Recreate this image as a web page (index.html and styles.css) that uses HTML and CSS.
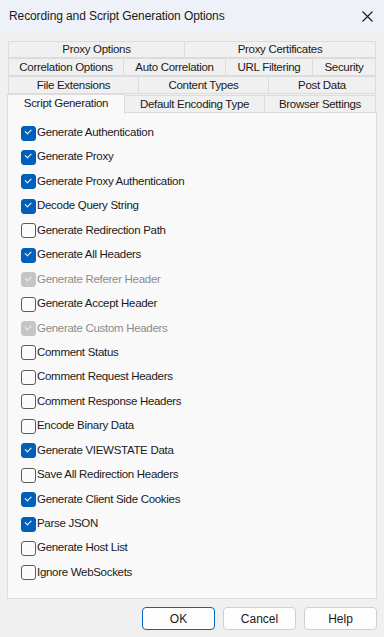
FILE: index.html
```html
<!DOCTYPE html>
<html lang="en">

<head>
    <meta charset="UTF-8">
    <meta name="viewport" content="width=device-width, initial-scale=1.0">
    <title>Recording and Script Generation Options</title>
    <link rel="stylesheet" href="styles.css">
</head>

<body>
    <div class="window">
        <div class="titlebar">
            <span class="title">Recording and Script Generation Options</span>
            <svg class="close" width="11" height="11" viewBox="0 0 11 11">
                <path d="M0.5 0.5 L10.5 10.5 M10.5 0.5 L0.5 10.5" stroke="#1a1a1a" stroke-width="1.1" fill="none" />
            </svg>
        </div>

        <div class="content">
            <div class="tabs">
                <div class="tab-row row-1">
                    <div class="tab">Proxy Options</div>
                    <div class="tab">Proxy Certificates</div>
                </div>
                <div class="tab-row row-2">
                    <div class="tab">Correlation Options</div>
                    <div class="tab">Auto Correlation</div>
                    <div class="tab">URL Filtering</div>
                    <div class="tab">Security</div>
                </div>
                <div class="tab-row row-3">
                    <div class="tab">File Extensions</div>
                    <div class="tab">Content Types</div>
                    <div class="tab">Post Data</div>
                </div>
                <div class="tab-row row-4">
                    <div class="tab active">Script Generation</div>
                    <div class="tab">Default Encoding Type</div>
                    <div class="tab">Browser Settings</div>
                </div>
            </div>

            <div class="panel">
                <ul class="options">
                    <li class="checked">Generate Authentication</li>
                    <li class="checked">Generate Proxy</li>
                    <li class="checked">Generate Proxy Authentication</li>
                    <li class="checked">Decode Query String</li>
                    <li>Generate Redirection Path</li>
                    <li class="checked">Generate All Headers</li>
                    <li class="checked disabled">Generate Referer Header</li>
                    <li>Generate Accept Header</li>
                    <li class="checked disabled">Generate Custom Headers</li>
                    <li>Comment Status</li>
                    <li>Comment Request Headers</li>
                    <li>Comment Response Headers</li>
                    <li>Encode Binary Data</li>
                    <li class="checked">Generate VIEWSTATE Data</li>
                    <li>Save All Redirection Headers</li>
                    <li class="checked">Generate Client Side Cookies</li>
                    <li class="checked">Parse JSON</li>
                    <li>Generate Host List</li>
                    <li>Ignore WebSockets</li>
                </ul>
            </div>

            <div class="buttons">
                <button class="btn default">OK</button>
                <button class="btn">Cancel</button>
                <button class="btn">Help</button>
            </div>
        </div>
    </div>
</body>

</html>
```

FILE: styles.css
```css
* {
    box-sizing: border-box;
}

html,
body {
    margin: 0;
    padding: 0;
}

body {
    width: 384px;
    height: 637px;
    background-color: #f0f0f0;
    font-family: 'Liberation Sans', Arial, sans-serif;
    font-size: 11.5px;
    letter-spacing: -0.3px;
    color: #1a1a1a;
    overflow: hidden;
}

.window {
    height: 637px;
    display: flex;
    flex-direction: column;
}

.titlebar {
    height: 32px;
    flex: none;
    display: flex;
    align-items: center;
    justify-content: space-between;
    padding: 0 11px 0 9px;
    background-color: #eef2f8;
}

.title {
    font-size: 12px;
    letter-spacing: -0.1px;
}

.content {
    padding: 9px 7px 0 7px;
}

/* tabs */
.tabs {
    padding-left: 1px;
}

.tab-row {
    display: grid;
    height: 18px;
}

.row-1 {
    grid-template-columns: 176px 191px;
    height: 17px;
}

.row-2 {
    grid-template-columns: 115px 102px 87px 63px;
}

.row-3 {
    grid-template-columns: 130px 130px 107px;
}

.row-4 {
    grid-template-columns: 116px 140px 111px;
    align-items: end;
}

.tab {
    height: 18px;
    margin-right: -1px;
    border: 1px solid #dcdcdc;
    background-color: #f0f0f0;
    text-align: center;
    line-height: 16px;
    white-space: nowrap;
}

.row-1 .tab {
    height: 17px;
    line-height: 15px;
}

.tab.active {
    position: relative;
    z-index: 1;
    height: 20px;
    margin-left: -1px;
    margin-right: -1px;
    margin-bottom: -1px;
    border-bottom: none;
    background-color: #f9f9f9;
    line-height: 16px;
}

/* panel */
.panel {
    height: 487px;
    border: 1px solid #dcdcdc;
    background-color: #f9f9f9;
}

.options {
    list-style: none;
    margin: 0;
    padding: 7px 0 0 13px;
}

.options li {
    position: relative;
    height: 24.45px;
    line-height: 24px;
    padding-left: 16px;
    white-space: nowrap;
}

.options li::before {
    content: "";
    position: absolute;
    left: 0;
    top: 5.5px;
    width: 13px;
    height: 13px;
    border: 1px solid #5b5b5b;
    border-radius: 3px;
    background-color: #fbfbfb;
}

.options li.checked::before {
    border-color: #005fb8;
    background-color: #005fb8;
}

.options li.checked::after {
    content: "";
    position: absolute;
    left: 4px;
    top: 9px;
    width: 5px;
    height: 2.5px;
    border-left: 1px solid #ffffff;
    border-bottom: 1px solid #ffffff;
    transform: rotate(-45deg);
}

.options li.disabled {
    color: #8c8c8c;
}

.options li.disabled::before {
    border-color: #c5c5c5;
    background-color: #c5c5c5;
}

.options li.disabled::after {
    border-color: #eeeeee;
}

/* buttons */
.buttons {
    display: flex;
    justify-content: flex-end;
    gap: 8px;
    margin-top: 8px;
}

.btn {
    width: 73px;
    height: 23px;
    border: 1px solid #d0d0d0;
    border-radius: 4px;
    background-color: #fdfdfd;
    font-family: 'Liberation Sans', Arial, sans-serif;
    font-size: 12px;
    color: #1a1a1a;
    padding: 0;
}

.btn.default {
    border-color: #0067c0;
}
```
